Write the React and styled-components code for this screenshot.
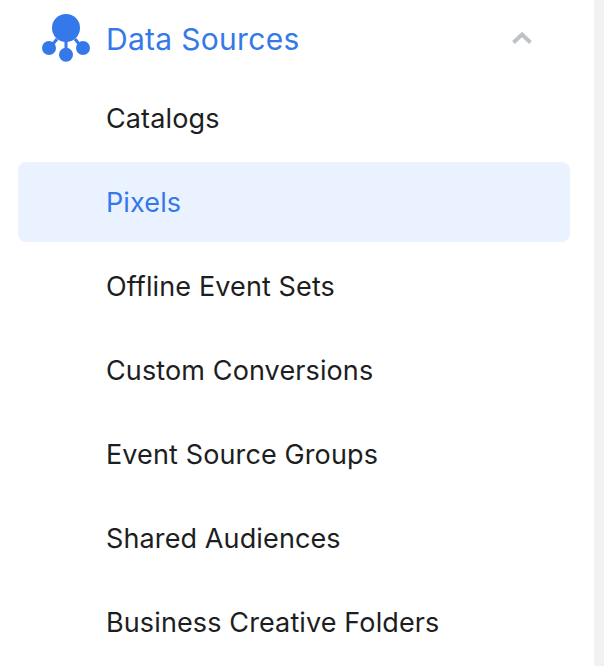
import React from "react";
import styled, { createGlobalStyle } from "styled-components";

const Global = createGlobalStyle`
  html, body { margin: 0; padding: 0; background: #fff; overflow: hidden; }
  #root { height: 666px; }
`;

const Page = styled.div`
  display: flex;
  width: 604px;
  height: 666px;
  overflow: hidden;
  font-family: Inter, "Liberation Sans", sans-serif;
`;

const Sidebar = styled.nav`
  flex: 1;
  padding: 0 24px 0 18px;
  background: #fff;
`;

const Scrollbar = styled.div`
  width: 10px;
  background: #f1f1f1;
`;

const Header = styled.div`
  display: flex;
  align-items: center;
  height: 76px;
  margin-bottom: 2px;
`;

const IconSlot = styled.div`
  display: flex;
  width: 88px;
  padding-left: 24px;
  box-sizing: border-box;
`;

const HeaderTitle = styled.span`
  flex: 1;
  padding-top: 2px;
  font-size: 30px;
  letter-spacing: 0.3px;
  color: #3578e9;
`;

const Chevron = styled.svg`
  margin-right: 37px;
`;

const List = styled.div`
  display: flex;
  flex-direction: column;
  gap: 4px;
`;

const Item = styled.div`
  display: flex;
  align-items: center;
  height: 80px;
  padding-left: 88px;
  border-radius: 8px;
  font-size: 27px;
  letter-spacing: 0.12px;
  color: ${(p) => (p.$active ? "#3578e9" : "#1c1e21")};
  background: ${(p) => (p.$active ? "#ebf2ff" : "transparent")};
`;

const items = [
  "Catalogs",
  "Pixels",
  "Offline Event Sets",
  "Custom Conversions",
  "Event Source Groups",
  "Shared Audiences",
  "Business Creative Folders",
];

export default function App() {
  return (
    <Page>
      <Global />
      <Sidebar>
        <Header>
          <IconSlot>
            <svg width="48" height="48" viewBox="0 0 48 48" fill="#3578e9" stroke="#3578e9">
              <circle cx="24" cy="14" r="14" stroke="none" />
              <circle cx="7" cy="34" r="7" stroke="none" />
              <circle cx="24" cy="40.7" r="7" stroke="none" />
              <circle cx="41" cy="34" r="7" stroke="none" />
              <path d="M24 26V36M15 25L11 30M33 25L37 30" strokeWidth="3" fill="none" />
            </svg>
          </IconSlot>
          <HeaderTitle>Data Sources</HeaderTitle>
          <Chevron width="22" height="14" viewBox="0 0 22 14" fill="none">
            <path d="M2.5 11.5L11 3.5L19.5 11.5" stroke="#bec1c6" strokeWidth="4" />
          </Chevron>
        </Header>
        <List>
          {items.map((t) => (
            <Item key={t} $active={t === "Pixels"}>{t}</Item>
          ))}
        </List>
      </Sidebar>
      <Scrollbar />
    </Page>
  );
}
